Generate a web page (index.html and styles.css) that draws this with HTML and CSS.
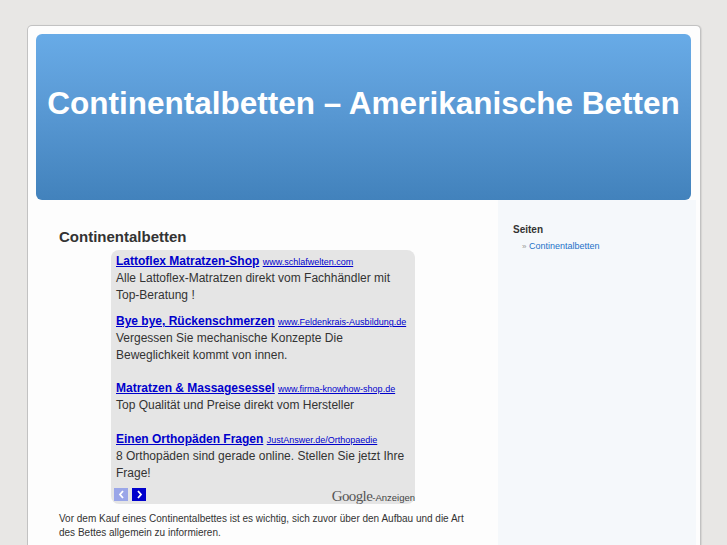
FILE: index.html
```html
<!DOCTYPE html>
<html lang="de">
<head>
<meta charset="utf-8">
<title>Continentalbetten – Amerikanische Betten</title>
<link rel="stylesheet" href="styles.css">
</head>
<body>
<div class="page">
  <header class="header">
    <h1 class="site-title">Continentalbetten – Amerikanische Betten</h1>
  </header>
  <div class="columns">
    <main class="main">
      <h2 class="post-title">Continentalbetten</h2>
      <div class="adbox">
        <div class="ad gap-s">
          <div class="ad-line"><a class="ad-title" href="#">Lattoflex Matratzen-Shop</a> <a class="ad-url" href="#">www.schlafwelten.com</a></div>
          <div class="ad-desc">Alle Lattoflex-Matratzen direkt vom Fachhändler mit Top-Beratung !</div>
        </div>
        <div class="ad gap-m">
          <div class="ad-line"><a class="ad-title" href="#">Bye bye, Rückenschmerzen</a> <a class="ad-url" href="#">www.Feldenkrais-Ausbildung.de</a></div>
          <div class="ad-desc">Vergessen Sie mechanische Konzepte Die Beweglichkeit kommt von innen.</div>
        </div>
        <div class="ad gap-l">
          <div class="ad-line"><a class="ad-title" href="#">Matratzen &amp; Massagesessel</a> <a class="ad-url" href="#">www.firma-knowhow-shop.de</a></div>
          <div class="ad-desc">Top Qualität und Preise direkt vom Hersteller</div>
        </div>
        <div class="ad">
          <div class="ad-line"><a class="ad-title" href="#">Einen Orthopäden Fragen</a> <a class="ad-url" href="#">JustAnswer.de/Orthopaedie</a></div>
          <div class="ad-desc">8 Orthopäden sind gerade online. Stellen Sie jetzt Ihre Frage!</div>
        </div>
        <div class="ad-footer">
          <div class="ad-nav">
            <span class="nav-btn nav-prev"><svg width="9" height="9" viewBox="0 0 9 9"><path d="M6 1 L3 4.5 L6 8" fill="none" stroke="#fff" stroke-width="1.8"/></svg></span>
            <span class="nav-btn nav-next"><svg width="9" height="9" viewBox="0 0 9 9"><path d="M3 1 L6 4.5 L3 8" fill="none" stroke="#fff" stroke-width="1.8"/></svg></span>
          </div>
          <div class="ad-brand"><span class="google">Google</span><span class="anz">-Anzeigen</span></div>
        </div>
      </div>
      <p class="intro">Vor dem Kauf eines Continentalbettes ist es wichtig, sich zuvor über den Aufbau und die Art des Bettes allgemein zu informieren.</p>
    </main>
    <aside class="sidebar">
      <h3 class="side-title">Seiten</h3>
      <ul class="side-list">
        <li><span class="raquo">»</span> <a href="#">Continentalbetten</a></li>
      </ul>
    </aside>
  </div>
</div>
</body>
</html>
```

FILE: styles.css
```css
* { box-sizing: border-box; }
html, body { margin: 0; padding: 0; }
body {
  background: #e8e7e5;
  font-family: "Liberation Sans", Arial, sans-serif;
  color: #333;
  height: 545px;
  overflow: hidden;
}
.page {
  margin: 25px 0 0 27px;
  width: 674px;
  height: 520px;
  background: #fdfdfd;
  border: 1px solid #c2c2c2;
  border-bottom: none;
  border-radius: 5px 5px 0 0;
  padding: 8px 4px 0 8px;
  display: flex;
  flex-direction: column;
  box-shadow: 1px 0 1px rgba(0,0,0,0.08);
}
.header {
  width: 655px;
  height: 166px;
  flex: none;
  border-radius: 6px;
  background: linear-gradient(#68abe7, #5b9bd6 40%, #4282bc);
  display: flex;
  align-items: center;
  justify-content: center;
}
.site-title {
  margin: 0 0 28px 0;
  color: #fff;
  font-size: 31.5px;
  font-weight: bold;
  white-space: nowrap;
}
.columns {
  display: flex;
  flex: 1;
  min-height: 0;
}
.main {
  width: 462px;
  padding: 28px 0 0 23px;
}
.post-title {
  margin: 0 0 4px 0;
  font-size: 15px;
  line-height: 18px;
  font-weight: bold;
  color: #333;
}
.adbox {
  margin-left: 52px;
  width: 304px;
  height: 254px;
  background: #e5e5e5;
  border-radius: 8px;
  padding: 3px 0 0 5px;
  font-size: 12px;
  line-height: 17px;
  color: #333;
  display: flex;
  flex-direction: column;
}
.ad.gap-s { margin-bottom: 9px; }
.ad.gap-m { margin-bottom: 16px; }
.ad.gap-l { margin-bottom: 17px; }
.ad-line { height: 17px; white-space: nowrap; }
.ad-title {
  color: #0000cc;
  font-weight: bold;
  font-size: 12px;
  text-decoration: underline;
}
.ad-url {
  color: #0000cc;
  font-size: 9px;
  line-height: 1;
  text-decoration: underline;
}
.ad-desc { color: #333; }
.ad-footer {
  margin-top: auto;
  height: 18px;
  display: flex;
  justify-content: space-between;
  align-items: flex-start;
  padding-right: 1px;
}
.ad-nav { display: flex; gap: 4px; margin-left: -2px; padding-top: 2px; }
.nav-btn {
  width: 14px;
  height: 13px;
  display: flex;
  align-items: center;
  justify-content: center;
}
.nav-prev { background: #9aa6e8; }
.nav-next { background: #0000cc; }
.ad-brand {
  display: flex;
  align-items: baseline;
  line-height: 16px;
  padding-top: 2px;
  margin-right: -1px;
}
.google {
  font-family: "Liberation Serif", serif;
  font-size: 15px;
  color: #555;
  letter-spacing: -0.6px;
}
.anz {
  font-size: 9.5px;
  color: #444;
}
.intro {
  margin: 8px 0 0 0;
  font-size: 10px;
  line-height: 14px;
  color: #333;
  width: 415px;
}
.sidebar {
  width: 198px;
  background: #f5f8fb;
  padding: 23px 0 0 15px;
}
.side-title {
  margin: 0 0 4px 0;
  font-size: 10px;
  line-height: 13px;
  font-weight: bold;
  color: #333;
}
.side-list {
  list-style: none;
  margin: 0;
  padding: 0 0 0 9px;
  font-size: 9px;
  line-height: 12px;
}
.raquo { color: #999; font-size: 8px; }
.side-list a { color: #1e72c8; text-decoration: none; }
```
